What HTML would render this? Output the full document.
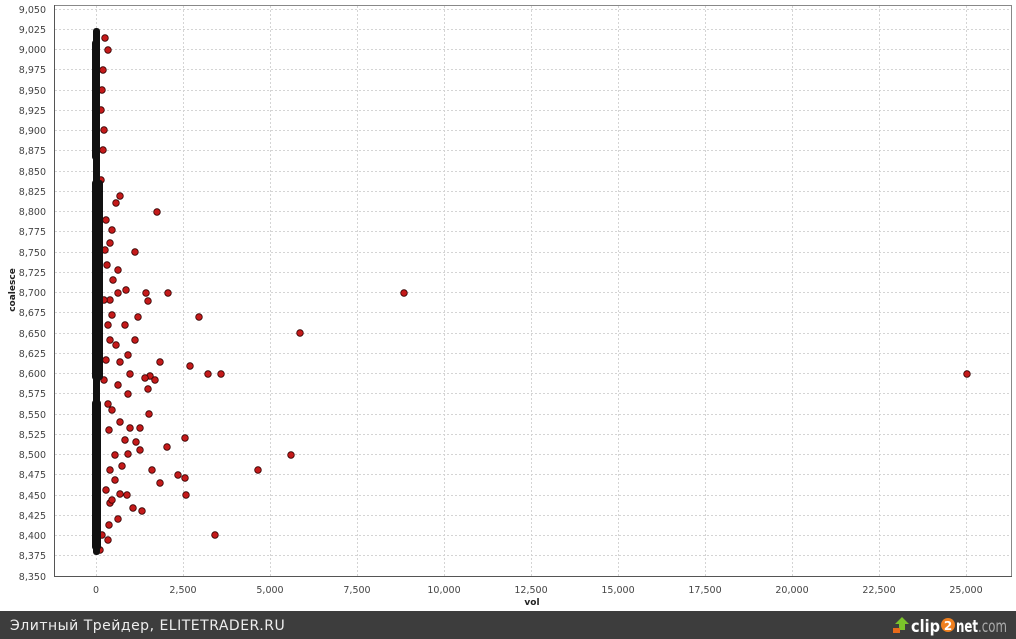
<!DOCTYPE html>
<html><head><meta charset="utf-8"><style>
html,body{margin:0;padding:0;width:1016px;height:639px;overflow:hidden;background:#fff;font-family:"DejaVu Sans","Liberation Sans",sans-serif}
svg text{font-family:"DejaVu Sans","Liberation Sans",sans-serif}
</style></head><body>
<svg width="1016" height="639" viewBox="0 0 1016 639" xmlns="http://www.w3.org/2000/svg">
<rect width="1016" height="639" fill="#fff"/>
<g stroke="#d4d4d4" stroke-width="1" stroke-dasharray="2,2">
<line x1="55" x2="1011" y1="29.5" y2="29.5"/><line x1="55" x2="1011" y1="49.5" y2="49.5"/><line x1="55" x2="1011" y1="69.5" y2="69.5"/><line x1="55" x2="1011" y1="90.5" y2="90.5"/><line x1="55" x2="1011" y1="110.5" y2="110.5"/><line x1="55" x2="1011" y1="130.5" y2="130.5"/><line x1="55" x2="1011" y1="150.5" y2="150.5"/><line x1="55" x2="1011" y1="171.5" y2="171.5"/><line x1="55" x2="1011" y1="191.5" y2="191.5"/><line x1="55" x2="1011" y1="211.5" y2="211.5"/><line x1="55" x2="1011" y1="231.5" y2="231.5"/><line x1="55" x2="1011" y1="252.5" y2="252.5"/><line x1="55" x2="1011" y1="272.5" y2="272.5"/><line x1="55" x2="1011" y1="292.5" y2="292.5"/><line x1="55" x2="1011" y1="312.5" y2="312.5"/><line x1="55" x2="1011" y1="333.5" y2="333.5"/><line x1="55" x2="1011" y1="353.5" y2="353.5"/><line x1="55" x2="1011" y1="373.5" y2="373.5"/><line x1="55" x2="1011" y1="393.5" y2="393.5"/><line x1="55" x2="1011" y1="414.5" y2="414.5"/><line x1="55" x2="1011" y1="434.5" y2="434.5"/><line x1="55" x2="1011" y1="454.5" y2="454.5"/><line x1="55" x2="1011" y1="474.5" y2="474.5"/><line x1="55" x2="1011" y1="495.5" y2="495.5"/><line x1="55" x2="1011" y1="515.5" y2="515.5"/><line x1="55" x2="1011" y1="535.5" y2="535.5"/><line x1="55" x2="1011" y1="555.5" y2="555.5"/><line x1="55" x2="1011" y1="9.5" y2="9.5"/>
<line y1="6" y2="576" x1="96.5" x2="96.5"/><line y1="6" y2="576" x1="183.5" x2="183.5"/><line y1="6" y2="576" x1="270.5" x2="270.5"/><line y1="6" y2="576" x1="357.5" x2="357.5"/><line y1="6" y2="576" x1="444.5" x2="444.5"/><line y1="6" y2="576" x1="531.5" x2="531.5"/><line y1="6" y2="576" x1="618.5" x2="618.5"/><line y1="6" y2="576" x1="705.5" x2="705.5"/><line y1="6" y2="576" x1="792.5" x2="792.5"/><line y1="6" y2="576" x1="879.5" x2="879.5"/><line y1="6" y2="576" x1="966.5" x2="966.5"/>
</g>
<rect x="54.5" y="5.5" width="957" height="571" fill="none" stroke="#888" stroke-width="1"/>
<line x1="54.5" y1="5" x2="54.5" y2="577" stroke="#555"/><line x1="54" y1="576.5" x2="1012" y2="576.5" stroke="#555"/>
<g fill="#444" font-size="9.5" text-anchor="end">
<text x="46" y="13">9,050</text><text x="46" y="33">9,025</text><text x="46" y="53">9,000</text><text x="46" y="73">8,975</text><text x="46" y="94">8,950</text><text x="46" y="114">8,925</text><text x="46" y="134">8,900</text><text x="46" y="154">8,875</text><text x="46" y="175">8,850</text><text x="46" y="195">8,825</text><text x="46" y="215">8,800</text><text x="46" y="235">8,775</text><text x="46" y="256">8,750</text><text x="46" y="276">8,725</text><text x="46" y="296">8,700</text><text x="46" y="316">8,675</text><text x="46" y="337">8,650</text><text x="46" y="357">8,625</text><text x="46" y="377">8,600</text><text x="46" y="397">8,575</text><text x="46" y="418">8,550</text><text x="46" y="438">8,525</text><text x="46" y="458">8,500</text><text x="46" y="478">8,475</text><text x="46" y="499">8,450</text><text x="46" y="519">8,425</text><text x="46" y="539">8,400</text><text x="46" y="559">8,375</text><text x="46" y="580">8,350</text>
</g>
<g fill="#444" font-size="9.5" text-anchor="middle">
<text x="96" y="593">0</text><text x="183" y="593">2,500</text><text x="270" y="593">5,000</text><text x="357" y="593">7,500</text><text x="444" y="593">10,000</text><text x="531" y="593">12,500</text><text x="618" y="593">15,000</text><text x="705" y="593">17,500</text><text x="792" y="593">20,000</text><text x="879" y="593">22,500</text><text x="966" y="593">25,000</text>
</g>
<text x="532" y="605" font-size="9" font-weight="bold" text-anchor="middle" fill="#222">vol</text>
<text transform="translate(15,290) rotate(-90)" font-size="9" font-weight="bold" text-anchor="middle" fill="#222">coalesce</text>
<g fill="#c41a1a" stroke="#300" stroke-width="0.8">
<circle cx="105" cy="38" r="3.3"/><circle cx="108" cy="50" r="3.3"/><circle cx="102" cy="90" r="3.3"/><circle cx="104" cy="130" r="3.3"/><circle cx="120" cy="196" r="3.3"/><circle cx="157" cy="212" r="3.3"/><circle cx="116" cy="203" r="3.3"/><circle cx="106" cy="220" r="3.3"/><circle cx="110" cy="243" r="3.3"/><circle cx="135" cy="252" r="3.3"/><circle cx="118" cy="270" r="3.3"/><circle cx="126" cy="290" r="3.3"/><circle cx="118" cy="293" r="3.3"/><circle cx="146" cy="293" r="3.3"/><circle cx="168" cy="293" r="3.3"/><circle cx="404" cy="293" r="3.3"/><circle cx="148" cy="301" r="3.3"/><circle cx="199" cy="317" r="3.3"/><circle cx="138" cy="317" r="3.3"/><circle cx="300" cy="333" r="3.3"/><circle cx="125" cy="325" r="3.3"/><circle cx="110" cy="340" r="3.3"/><circle cx="190" cy="366" r="3.3"/><circle cx="208" cy="374" r="3.3"/><circle cx="221" cy="374" r="3.3"/><circle cx="967" cy="374" r="3.3"/><circle cx="130" cy="374" r="3.3"/><circle cx="150" cy="376" r="3.3"/><circle cx="160" cy="362" r="3.3"/><circle cx="145" cy="378" r="3.3"/><circle cx="120" cy="362" r="3.3"/><circle cx="148" cy="389" r="3.3"/><circle cx="128" cy="394" r="3.3"/><circle cx="149" cy="414" r="3.3"/><circle cx="120" cy="422" r="3.3"/><circle cx="130" cy="428" r="3.3"/><circle cx="185" cy="438" r="3.3"/><circle cx="136" cy="442" r="3.3"/><circle cx="167" cy="447" r="3.3"/><circle cx="291" cy="455" r="3.3"/><circle cx="128" cy="454" r="3.3"/><circle cx="258" cy="470" r="3.3"/><circle cx="152" cy="470" r="3.3"/><circle cx="178" cy="475" r="3.3"/><circle cx="160" cy="483" r="3.3"/><circle cx="185" cy="478" r="3.3"/><circle cx="186" cy="495" r="3.3"/><circle cx="120" cy="494" r="3.3"/><circle cx="110" cy="503" r="3.3"/><circle cx="133" cy="508" r="3.3"/><circle cx="142" cy="511" r="3.3"/><circle cx="118" cy="519" r="3.3"/><circle cx="215" cy="535" r="3.3"/><circle cx="108" cy="540" r="3.3"/><circle cx="100" cy="550" r="3.3"/><circle cx="102" cy="535" r="3.3"/><circle cx="122" cy="466" r="3.3"/><circle cx="110" cy="470" r="3.3"/><circle cx="115" cy="480" r="3.3"/><circle cx="140" cy="428" r="3.3"/><circle cx="125" cy="440" r="3.3"/><circle cx="108" cy="404" r="3.3"/><circle cx="112" cy="500" r="3.3"/><circle cx="115" cy="455" r="3.3"/><circle cx="104" cy="380" r="3.3"/><circle cx="112" cy="410" r="3.3"/><circle cx="118" cy="385" r="3.3"/><circle cx="135" cy="340" r="3.3"/><circle cx="128" cy="355" r="3.3"/><circle cx="155" cy="380" r="3.3"/><circle cx="110" cy="300" r="3.3"/><circle cx="112" cy="315" r="3.3"/><circle cx="140" cy="450" r="3.3"/><circle cx="127" cy="495" r="3.3"/><circle cx="105" cy="250" r="3.3"/><circle cx="113" cy="280" r="3.3"/><circle cx="108" cy="325" r="3.3"/><circle cx="103" cy="150" r="3.3"/><circle cx="101" cy="110" r="3.3"/><circle cx="103" cy="70" r="3.3"/><circle cx="101" cy="180" r="3.3"/><circle cx="104" cy="300" r="3.3"/><circle cx="106" cy="360" r="3.3"/><circle cx="112" cy="230" r="3.3"/><circle cx="107" cy="265" r="3.3"/><circle cx="116" cy="345" r="3.3"/><circle cx="109" cy="430" r="3.3"/><circle cx="106" cy="490" r="3.3"/><circle cx="109" cy="525" r="3.3"/>
</g>
<g fill="#111">
<rect x="93" y="28" width="7" height="527" rx="3"/>
<rect x="92" y="180" width="11" height="200" rx="3"/>
<rect x="92" y="400" width="9" height="150" rx="3"/>
<rect x="92" y="40" width="8" height="120" rx="3"/>
</g>
<rect x="0" y="611" width="1016" height="28" fill="#3d3d3d"/>
<text x="10" y="630" font-size="14" fill="#eee" font-family="Liberation Sans,sans-serif" letter-spacing="0.5">Элитный Трейдер, ELITETRADER.RU</text>
<g>
<path d="M902 617 l7 7 h-4 v6 h-6 v-6 h-4z" fill="#7bc32a"/>
<rect x="893" y="628" width="7" height="5" fill="#e86a1a"/>
<text x="911" y="632" font-size="17" font-weight="bold" fill="#fff" font-family="Liberation Sans,sans-serif" textLength="29" lengthAdjust="spacingAndGlyphs">clip</text>
<circle cx="948" cy="625" r="7" fill="#f08020"/>
<text x="948" y="630" font-size="12" font-weight="bold" fill="#fff" text-anchor="middle" font-family="Liberation Sans,sans-serif">2</text>
<text x="956" y="632" font-size="17" font-weight="bold" fill="#fff" font-family="Liberation Sans,sans-serif" textLength="51" lengthAdjust="spacingAndGlyphs">net<tspan fill="#aaa" font-weight="normal">.com</tspan></text>
</g>
</svg>
</body></html>
